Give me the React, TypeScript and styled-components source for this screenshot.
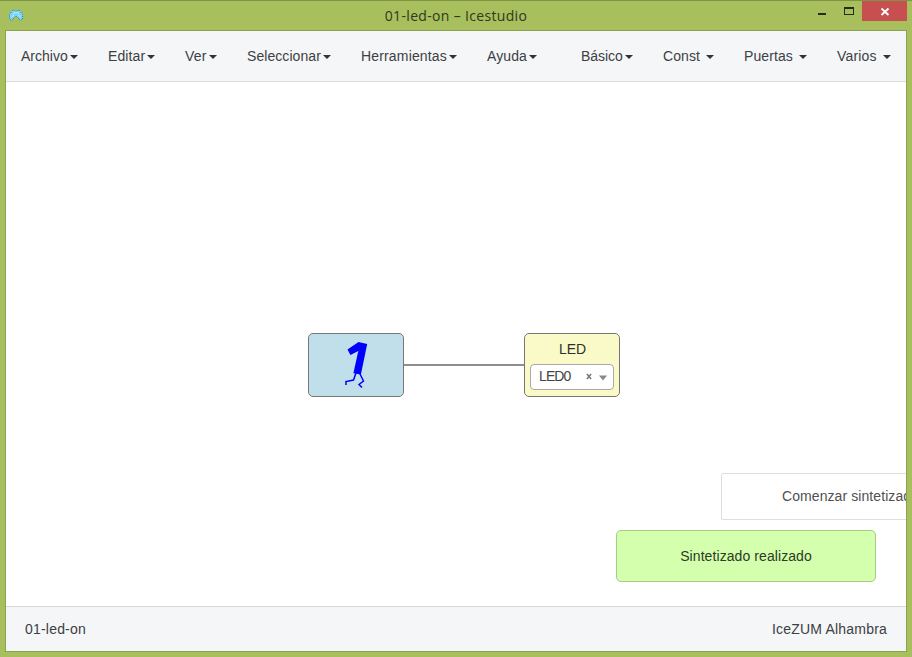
import React from "react";
import styled, { createGlobalStyle } from "styled-components";

const GlobalStyle = createGlobalStyle`
  *, *::before, *::after { box-sizing: border-box; }
  html, body { margin: 0; padding: 0; overflow: hidden; }
  body { font-family: "Liberation Sans", Arial, sans-serif; font-size: 14px; color: #3d4043; }
`;

const Frame = styled.div`
  width: 912px;
  height: 657px;
  display: flex;
  flex-direction: column;
  background: #a7bf5c;
  border-top: 1px solid #7f9344;
  padding: 0 5px 5px;
`;

const TitleBar = styled.header`
  flex: none;
  height: 29px;
  display: grid;
  grid-template-columns: 100px 1fr 100px;
  align-items: start;
`;

const AppIcon = styled.svg`
  display: block;
  margin: 7px 0 0 3px;
`;

const Title = styled.h1`
  margin: 5px 0 0;
  font: 400 14px/20px "Open Sans", "Noto Sans", sans-serif;
  letter-spacing: 0.33px;
  color: #303820;
  text-align: center;
  white-space: nowrap;
`;

const WindowButtons = styled.div`
  display: flex;
  justify-content: flex-end;
`;

const WindowButton = styled.button<{ $close?: boolean }>`
  width: ${(p) => (p.$close ? 45 : 27)}px;
  height: 20px;
  padding: 0;
  border: 0;
  background: ${(p) => (p.$close ? "#c84f50" : "transparent")};
  svg { display: block; }
`;

const Content = styled.main`
  flex: 1;
  min-height: 0;
  display: flex;
  flex-direction: column;
  border: 1px solid #8da151;
  background: #fff;
  overflow: hidden;
`;

const MenuBar = styled.nav`
  flex: none;
  height: 51px;
  display: flex;
  justify-content: space-between;
  background: #f4f6f8;
  border-bottom: 1px solid #d8dcdf;
`;

const MenuGroup = styled.div`
  display: flex;
`;

const MenuItem = styled.a<{ $width: number; $tracking: number }>`
  width: ${(p) => p.$width}px;
  display: flex;
  align-items: center;
  justify-content: space-between;
  padding: 0 15px;
  line-height: 20px;
  letter-spacing: ${(p) => p.$tracking}px;
  white-space: nowrap;

  &::after {
    content: "";
    margin-top: 1px;
    border: 4px solid transparent;
    border-top-color: #333;
    border-bottom: 0;
  }
`;

const Canvas = styled.section`
  flex: 1;
  position: relative;
  overflow: hidden;
`;

const Wire = styled.div`
  position: absolute;
  left: 398px;
  top: 282px;
  width: 120px;
  height: 2px;
  background: #8e8e8e;
`;

const Block = styled.div<{ $x: number; $fill: string }>`
  position: absolute;
  left: ${(p) => p.$x}px;
  top: 251px;
  width: 96px;
  height: 64px;
  display: flex;
  flex-direction: column;
  align-items: center;
  border: 1px solid #777;
  border-radius: 5px;
  background: ${(p) => p.$fill};
`;

const BlockLabel = styled.span`
  margin: 5px 0 0 1px;
  line-height: 20px;
  color: #303030;
`;

const PinSelect = styled.div`
  width: 84px;
  height: 26px;
  margin-top: 5px;
  padding: 0 5px 0 8px;
  display: flex;
  align-items: center;
  border: 1px solid #aaa;
  border-radius: 4px;
  background: #fff;
  color: #444;
`;

const PinName = styled.span`
  flex: 1;
  font-size: 14px;
  letter-spacing: -0.9px;
  margin-top: -2px;
`;

const Toast = styled.div<{ $success?: boolean }>`
  position: absolute;
  left: ${(p) => (p.$success ? 610 : 715)}px;
  top: ${(p) => (p.$success ? 448 : 391)}px;
  width: ${(p) => (p.$success ? 260 : 300)}px;
  height: ${(p) => (p.$success ? 52 : 47)}px;
  padding: ${(p) => (p.$success ? "0" : "0 0 2px 60px")};
  display: flex;
  align-items: center;
  justify-content: ${(p) => (p.$success ? "center" : "flex-start")};
  letter-spacing: 0.08px;
  border: 1px solid ${(p) => (p.$success ? "#a4cc85" : "#dedede")};
  border-radius: ${(p) => (p.$success ? 5 : 2)}px;
  background: ${(p) => (p.$success ? "#d4ffac" : "#fff")};
  color: ${(p) => (p.$success ? "#2d3a26" : "#505050")};
  white-space: nowrap;
`;

const StatusBar = styled.footer`
  flex: none;
  height: 45px;
  display: flex;
  align-items: center;
  justify-content: space-between;
  padding: 0 19px;
  letter-spacing: 0.2px;
  background: #f4f6f8;
  border-top: 1px solid #d4d8db;
`;

const menus = [
  { name: "Archivo", width: 87, tracking: 0 },
  { name: "Editar", width: 77, tracking: 0.12 },
  { name: "Ver", width: 62, tracking: 0.2 },
  { name: "Seleccionar", width: 114, tracking: 0.07 },
  { name: "Herramientas", width: 126, tracking: 0.16 },
  { name: "Ayuda", width: 80, tracking: 0.1 },
];
const palettes = [
  { name: "Básico", width: 82, tracking: -0.05 },
  { name: "Const", width: 81, tracking: 0.1 },
  { name: "Puertas", width: 93, tracking: 0.1 },
  { name: "Varios", width: 84, tracking: 0.15 },
];

export default function App() {
  return (
    <>
      <GlobalStyle />
      <Frame>
        <TitleBar>
          <AppIcon width="16" height="15" viewBox="0 0 16 15">
            <path d="M1 6.5 4.5 1.5 8 3 11.5 1.5 15 6.5V11.5L12.5 13 11 10.5 8 8 5 10.5 3.5 13 1 11.5Z" fill="#7dd6f4" />
            <path d="M1.5 6.5 5 1.8 8 3.3 11 1.8 14.5 6.5v5l-2.5 1L10.5 10 8 8 5.5 10 4 12.5l-2.5-1Z" fill="none" stroke="#2d7290" strokeDasharray="1 1.2" />
            <path d="m5 6 3-2 3 2M3.5 9 6 7m6.500 2L10 7" fill="none" stroke="#b5ecfc" />
          </AppIcon>
          <Title>01-led-on – Icestudio</Title>
          <WindowButtons>
            <WindowButton aria-label="Minimizar">
              <svg width="27" height="20"><rect x="10" y="12" width="8" height="2" fill="#272c18" /></svg>
            </WindowButton>
            <WindowButton aria-label="Maximizar">
              <svg width="27" height="20"><path d="M9 6h10v8H9ZM10 8v5h8V8Z" fill="#272c18" fillRule="evenodd" /></svg>
            </WindowButton>
            <WindowButton $close aria-label="Cerrar">
              <svg width="45" height="20"><path d="m19.500 7.500 7 6.500m0-6.500-7 6.500" stroke="#fff" strokeWidth="1.8" /></svg>
            </WindowButton>
          </WindowButtons>
        </TitleBar>
        <Content>
          <MenuBar>
            <MenuGroup>
              {menus.map(({ name, width, tracking }) => (
                <MenuItem key={name} $width={width} $tracking={tracking}>{name}</MenuItem>
              ))}
            </MenuGroup>
            <MenuGroup>
              {palettes.map(({ name, width, tracking }) => (
                <MenuItem key={name} $width={width} $tracking={tracking}>{name}</MenuItem>
              ))}
            </MenuGroup>
          </MenuBar>
          <Canvas>
            <Wire />
            <Block $x={302} $fill="#c0dfea">
              <svg width="94" height="62">
                <path d="M38.500 15.500 49.500 8l8.700 2-6.300 30.500-7.500-1.200 4.900-22.300-7.900 4Z" fill="#00f" />
                <path d="m47 39-2.500 7-7.500 1.500v3.500M50.500 39l4 8-4.500 3.500 3 3" fill="none" stroke="#00f" strokeWidth="1.500" />
              </svg>
            </Block>
            <Block $x={518} $fill="#fafac8">
              <BlockLabel>LED</BlockLabel>
              <PinSelect>
                <PinName>LED0</PinName>
                <svg width="22" height="10">
                  <path d="m.9 2 4.200 5m0-5L.9 7" stroke="#777" strokeWidth="1.500" />
                  <path d="M13 3.500h8l-4 5Z" fill="#888" />
                </svg>
              </PinSelect>
            </Block>
            <Toast>Comenzar sintetizado</Toast>
            <Toast $success>Sintetizado realizado</Toast>
          </Canvas>
          <StatusBar>
            <span>01-led-on</span>
            <span>IceZUM Alhambra</span>
          </StatusBar>
        </Content>
      </Frame>
    </>
  );
}
